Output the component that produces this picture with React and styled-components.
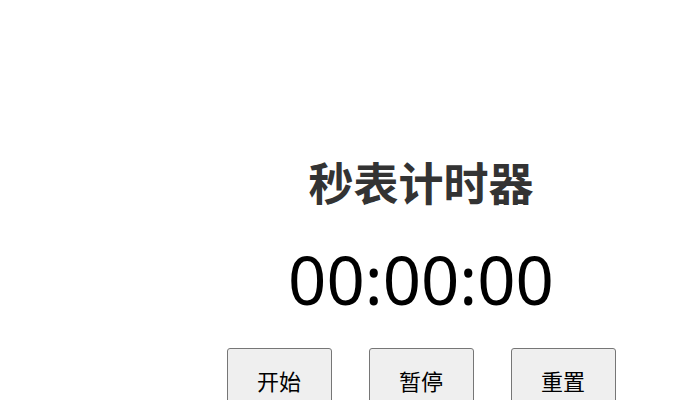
import React, { useState, useRef, useEffect } from "react";
import styled, { createGlobalStyle } from "styled-components";

const GlobalStyle = createGlobalStyle`
  html, body {
    margin: 0;
    background: #ffffff;
  }
  body {
    font-family: "Noto Sans", "Noto Sans CJK SC", sans-serif;
  }
`;

const Page = styled.div`
  display: flex;
  flex-direction: column;
  align-items: center;
  padding: 152px 0 0 142px;
  height: 400px;
  box-sizing: border-box;
  overflow: hidden;
`;

const Title = styled.h1`
  margin: 0;
  font-family: "Noto Sans CJK SC", sans-serif;
  font-size: 45px;
  font-weight: 700;
  line-height: 60px;
  color: #333333;
`;

const Clock = styled.div`
  margin-top: 24px;
  font-family: "Noto Sans", "Noto Sans CJK SC", sans-serif;
  font-size: 67px;
  line-height: 86px;
  color: #000000;
`;

const Controls = styled.div`
  display: flex;
  gap: 37px;
  margin-top: 26px;
`;

const Button = styled.button`
  width: 105px;
  height: 64px;
  font-family: "Noto Sans CJK SC", sans-serif;
  font-size: 22px;
  color: #000000;
  background: #efefef;
  border: 1px solid #767676;
  border-radius: 3px;
  padding: 0;
  cursor: pointer;

  &:hover {
    background: #e5e5e5;
  }
`;

const pad = (n) => String(n).padStart(2, "0");

function format(ms) {
  const total = Math.floor(ms / 1000);
  const h = Math.floor(total / 3600);
  const m = Math.floor((total % 3600) / 60);
  const s = total % 60;
  return `${pad(h)}:${pad(m)}:${pad(s)}`;
}

export default function App() {
  const [elapsed, setElapsed] = useState(0);
  const [running, setRunning] = useState(false);
  const startRef = useRef(0);

  useEffect(() => {
    if (!running) return;
    startRef.current = Date.now() - elapsed;
    const id = setInterval(() => setElapsed(Date.now() - startRef.current), 200);
    return () => clearInterval(id);
  }, [running]);

  return (
    <>
      <GlobalStyle />
      <Page>
        <Title>秒表计时器</Title>
        <Clock>{format(elapsed)}</Clock>
        <Controls>
          <Button onClick={() => setRunning(true)}>开始</Button>
          <Button onClick={() => setRunning(false)}>暂停</Button>
          <Button
            onClick={() => {
              setRunning(false);
              setElapsed(0);
            }}
          >
            重置
          </Button>
        </Controls>
      </Page>
    </>
  );
}
